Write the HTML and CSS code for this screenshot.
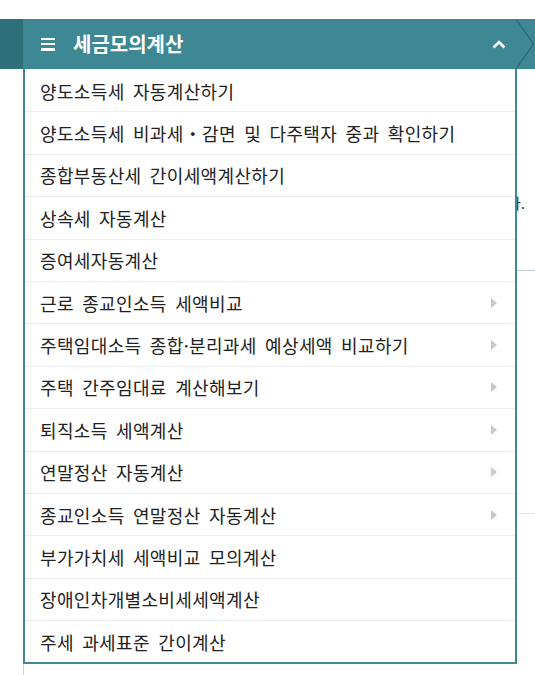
FILE: index.html
```html
<!DOCTYPE html>
<html lang="ko">
<head>
<meta charset="utf-8">
<title>세금모의계산</title>
<link rel="stylesheet" href="styles.css">
</head>
<body>
<div class="page">
  <div class="topbar">
    <div class="side-block"></div>
    <div class="menu-head">
      <span class="burger"><i></i><i></i><i></i></span>
      <span class="title">세금모의계산</span>
      <svg class="chev" width="14" height="9" viewBox="0 0 14 9"><polyline points="1.5,7.5 7,2 12.5,7.5" fill="none" stroke="#fff" stroke-width="2.6"/></svg>
    </div>
    <div class="next-seg">
      <svg width="19" height="50" viewBox="0 0 19 50"><polyline points="0,0 17.5,25 0,50" fill="none" stroke="#2a6670" stroke-width="1.2"/></svg>
    </div>
  </div>
  <div class="body-area">
    <div class="content">
      <p class="notice">있습니다.</p>
      <div class="rule rule-a"></div>
      <div class="rule rule-b"></div>
    </div>
    <ul class="dropdown">
      <li>양도소득세 자동계산하기</li>
      <li>양도소득세 비과세・감면 및 다주택자 중과 확인하기</li>
      <li>종합부동산세 간이세액계산하기</li>
      <li>상속세 자동계산</li>
      <li>증여세자동계산</li>
      <li class="sub">근로 종교인소득 세액비교</li>
      <li class="sub">주택임대소득 종합·분리과세 예상세액 비교하기</li>
      <li class="sub">주택 간주임대료 계산해보기</li>
      <li class="sub">퇴직소득 세액계산</li>
      <li class="sub">연말정산 자동계산</li>
      <li class="sub">종교인소득 연말정산 자동계산</li>
      <li>부가가치세 세액비교 모의계산</li>
      <li>장애인차개별소비세세액계산</li>
      <li>주세 과세표준 간이계산</li>
    </ul>
  </div>
</div>
</body>
</html>
```
FILE: styles.css
```css
* { box-sizing: border-box; }
html, body { margin: 0; padding: 0; background: #fff; }
body {
  font-family: "Noto Sans CJK KR", "Noto Sans", sans-serif;
  color: #222;
  width: 535px;
  height: 675px;
  overflow: hidden;
}
.page { padding-top: 19px; }
.topbar {
  display: flex;
  height: 50px;
}
.side-block {
  width: 23px;
  background: #2f6f7a;
}
.menu-head {
  width: 493px;
  background: #3d8893;
  display: flex;
  align-items: center;
  padding-left: 18px;
  padding-right: 10px;
}
.burger {
  display: flex;
  flex-direction: column;
  justify-content: space-between;
  width: 14px;
  height: 13px;
}
.burger i {
  display: block;
  height: 2.6px;
  background: #fff;
}
.title {
  margin-left: 18px;
  color: #fff;
  font-size: 20px;
  font-weight: bold;
  line-height: 1;
  margin-top: -1px;
}
.chev {
  margin-left: auto;
  margin-top: 1px;
}
.next-seg {
  flex: 1;
  background: #3d8893;
  display: flex;
}
.body-area {
  position: relative;
  height: 606px;
}
.content {
  margin-left: 23px;
  border-left: 1px solid #d4d4d4;
  height: 100%;
  position: relative;
}
.notice {
  margin: 0;
  padding-top: 122px;
  padding-right: 10px;
  text-align: right;
  font-size: 15px;
  line-height: 24px;
  color: #333;
  white-space: nowrap;
}
.rule {
  height: 1px;
  margin-left: 40px;
}
.rule-a { margin-top: 55px; background: #c3cfd6; }
.rule-b { margin-top: 242px; background: #e6e6e6; }
.dropdown {
  position: absolute;
  top: 0;
  left: 23px;
  width: 494px;
  margin: 0;
  padding: 1px 0 0;
  list-style: none;
  background: #fff;
  border: 2px solid #3d8893;
  border-top: none;
}
.dropdown li {
  height: 42.4px;
  display: flex;
  align-items: center;
  padding-left: 15px;
  font-size: 18px;
  letter-spacing: 0.35px;
  word-spacing: 3px;
  border-bottom: 1px solid #ececec;
  position: relative;
}
.dropdown li:last-child { border-bottom: none; height: 41.4px; }
.dropdown li.sub::after {
  content: "";
  position: absolute;
  right: 18px;
  top: 50%;
  margin-top: -5px;
  border-left: 6px solid #c8c8c8;
  border-top: 5px solid transparent;
  border-bottom: 5px solid transparent;
}
```
